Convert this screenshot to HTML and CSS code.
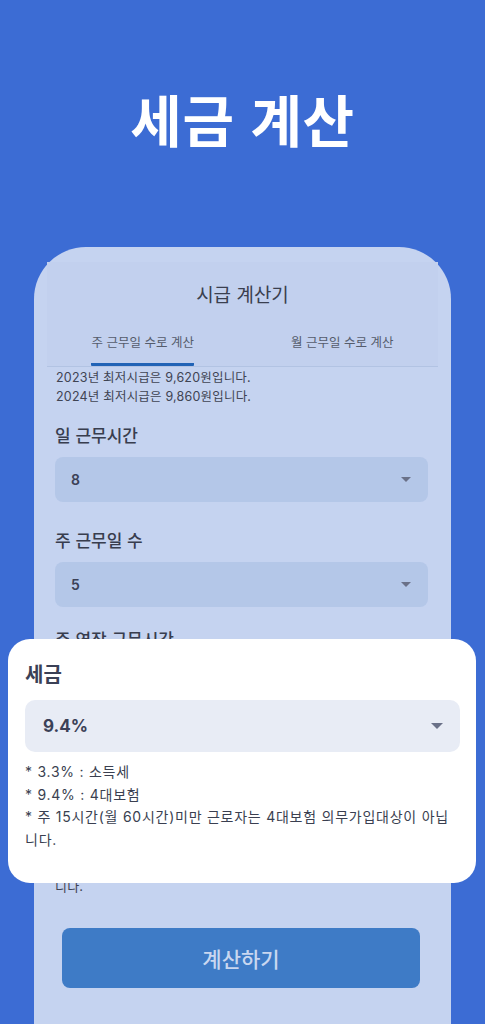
FILE: index.html
```html
<!DOCTYPE html>
<html lang="ko">
<head>
<meta charset="utf-8">
<link rel="stylesheet" href="styles.css">
</head>
<body>
<div class="screen">
  <h1 class="title">세금 계산</h1>
  <div class="phone">
    <div class="head">
      <div class="head-title">시급 계산기</div>
      <div class="tabs">
        <div class="tab active"><span>주 근무일 수로 계산</span></div>
        <div class="tab"><span>월 근무일 수로 계산</span></div>
      </div>
    </div>
    <div class="content">
      <p class="info">2023년 최저시급은 9,620원입니다.<br>2024년 최저시급은 9,860원입니다.</p>
      <div class="label first">일 근무시간</div>
      <div class="select"><span>8</span><i class="caret"></i></div>
      <div class="label">주 근무일 수</div>
      <div class="select"><span>5</span><i class="caret"></i></div>
      <div class="covered">
        <div class="label">주 연장 근무시간</div>
        <p class="info tail">니다.</p>
      </div>
      <button class="calc">계산하기</button>
    </div>
  </div>
  <div class="popup">
    <div class="popup-label">세금</div>
    <div class="popup-select"><span>9.4%</span><i class="caret"></i></div>
    <p class="notes">* 3.3% : 소득세<br>* 9.4% : 4대보험<br>* 주 15시간(월 60시간)미만 근로자는 4대보험 의무가입대상이 아닙<br>니다.</p>
  </div>
</div>
</body>
</html>
```
FILE: styles.css
```css
* { box-sizing: border-box; }
html, body { margin: 0; padding: 0; }
body {
  background: #3c6cd4;
  font-family: "Inter", "Noto Sans CJK KR", sans-serif;
  color: #3a3f50;
}
.screen {
  position: relative;
  width: 485px;
  height: 1024px;
  overflow: hidden;
  display: flex;
  flex-direction: column;
}
.title {
  margin: 80px 0 0;
  height: 76px;
  line-height: 76px;
  text-align: center;
  color: #ffffff;
  font-family: "Noto Sans CJK KR", sans-serif;
  font-size: 56px;
  font-weight: 700;
  letter-spacing: 0.5px;
}
.phone {
  margin: 91px 34px 0;
  flex: 1;
  background: #c5d3f0;
  border-radius: 52px 52px 0 0;
  padding: 15px 13px 0;
}
.head {
  background: #c2d0ee;
  border-bottom: 1px solid #b2c3e3;
}
.head-title {
  text-align: center;
  font-family: "Noto Sans CJK KR", sans-serif;
  font-size: 19px;
  height: 38px;
  padding-top: 20px;
  box-sizing: content-box;
  line-height: 24px;
  color: #3a3f4f;
}
.tabs {
  display: flex;
  margin-top: 13px;
}
.tab {
  flex: 1;
  display: flex;
  justify-content: center;
  font-family: "Noto Sans CJK KR", sans-serif;
  font-size: 12.5px;
  color: #555c6c;
}
.tab span {
  display: block;
  line-height: 18px;
  padding-bottom: 12px;
  border-bottom: 3px solid transparent;
}
.tab.active span {
  border-bottom-color: #2163b6;
  border-radius: 0 0 1px 1px;
}
.tab:last-child { padding-left: 8px; }
.content {
  padding: 0 10px 0 8px;
}
.info {
  margin: 1px 0 0 1px;
  font-size: 12.5px;
  line-height: 19px;
  letter-spacing: 0.2px;
  color: #3f4453;
}
.label {
  margin-top: 26px;
  font-family: "Noto Sans CJK KR", sans-serif;
  font-size: 17px;
  font-weight: 500;
  line-height: 24px;
  color: #383d4e;
}
.label.first { margin-top: 17px; }
.select {
  margin-top: 10px;
  height: 45px;
  border-radius: 8px;
  background: #b4c7e8;
  display: flex;
  align-items: center;
  justify-content: space-between;
  padding: 0 16px;
  font-size: 14px;
  font-weight: 600;
  color: #3b4157;
}
.caret {
  width: 0;
  height: 0;
  border-left: 5px solid transparent;
  border-right: 5px solid transparent;
  border-top: 5px solid #6a7188;
  margin-right: 1px;
}
.covered {
  height: 289px;
  display: flex;
  flex-direction: column;
  justify-content: space-between;
}
.covered .label { margin-top: 20px; }
.tail { margin: 0; font-size: 13px; }
.calc {
  display: block;
  margin: 32px 8px 0 7px;
  width: calc(100% - 15px);
  height: 60px;
  border: none;
  border-radius: 8px;
  background: #3e7bc6;
  color: #c9d7f0;
  font-family: "Noto Sans CJK KR", sans-serif;
  font-size: 21px;
  font-weight: 500;
}
.popup {
  position: absolute;
  left: 8px;
  top: 639px;
  width: 468px;
  height: 244px;
  background: #ffffff;
  border-radius: 22px;
  padding: 20px 16px 0 17px;
}
.popup-label {
  font-family: "Noto Sans CJK KR", sans-serif;
  font-size: 20px;
  font-weight: 700;
  line-height: 30px;
  color: #3a4056;
}
.popup-select {
  margin-top: 11px;
  height: 52px;
  background: #e8ecf5;
  border-radius: 10px;
  display: flex;
  align-items: center;
  justify-content: space-between;
  padding: 0 18px;
  font-size: 17px;
  font-weight: 700;
  color: #3b4157;
}
.popup-select .caret {
  border-left-width: 6px;
  border-right-width: 6px;
  border-top-width: 6px;
  margin-right: -1px;
}
.notes {
  margin: 9px 0 0;
  font-size: 14px;
  line-height: 22.5px;
  letter-spacing: 0.75px;
  color: #3a3f50;
}
```
